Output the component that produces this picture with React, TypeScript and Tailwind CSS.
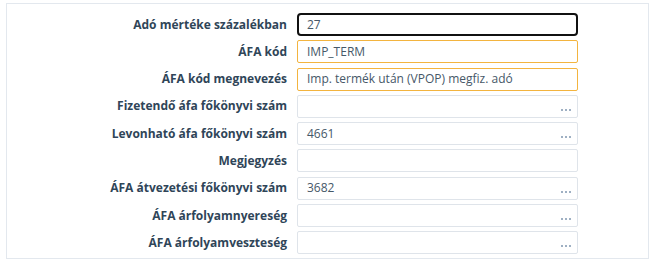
const rows: { label: string; value: string; kind?: "focus" | "warn"; lookup?: boolean }[] = [
  { label: "Adó mértéke százalékban", value: "27", kind: "focus" },
  { label: "ÁFA kód", value: "IMP_TERM", kind: "warn" },
  { label: "ÁFA kód megnevezés", value: "Imp. termék után (VPOP) megfiz. adó", kind: "warn" },
  { label: "Fizetendő áfa főkönyvi szám", value: "", lookup: true },
  { label: "Levonható áfa főkönyvi szám", value: "4661", lookup: true },
  { label: "Megjegyzés", value: "" },
  { label: "ÁFA átvezetési főkönyvi szám", value: "3682", lookup: true },
  { label: "ÁFA árfolyamnyereség", value: "", lookup: true },
  { label: "ÁFA árfolyamveszteség", value: "", lookup: true },
];

// lookup button: three small dots bottom-right
const Dots = () => (
  <span className="absolute right-[6px] bottom-[6px] flex gap-[2px]">
    <span className="w-[2px] h-[2px] bg-[#9fb0c3]" />
    <span className="w-[2px] h-[2px] bg-[#9fb0c3]" />
    <span className="w-[2px] h-[2px] bg-[#9fb0c3]" />
  </span>
);

const App = () => {
  return (
    <div className="bg-white w-[652px] h-[265px] pt-[3px] pl-[6px]" style={{ fontFamily: '"Open Sans", "Liberation Sans", sans-serif' }}>
      <div className="w-[643px] h-[256px] border border-[#e3e8ee] pt-[9px] flex flex-col gap-[4.3px]">
        {rows.map((r) => {
          const border =
            r.kind === "focus"
              ? "border-2 border-[#111111] rounded-[4px] pl-[8px]"
              : r.kind === "warn"
              ? "border border-[#f3b43f] rounded-[2px] pl-[9px]"
              : "border border-[#dfe4ea] rounded-[2px] pl-[9px]";
          return (
            <div key={r.label} className="flex items-center">
              <div className="w-[281px] text-right text-[12px] font-bold text-[#2f4558] leading-none pr-[1px]">
                {r.label}
              </div>
              <div className={`relative ml-[9px] w-[281px] h-[23px] flex items-center text-[12px] text-[#465868] bg-white ${border}`}>
                {r.value}
                {r.lookup && <Dots />}
              </div>
            </div>
          );
        })}
      </div>
    </div>
  );
};

export default App;
